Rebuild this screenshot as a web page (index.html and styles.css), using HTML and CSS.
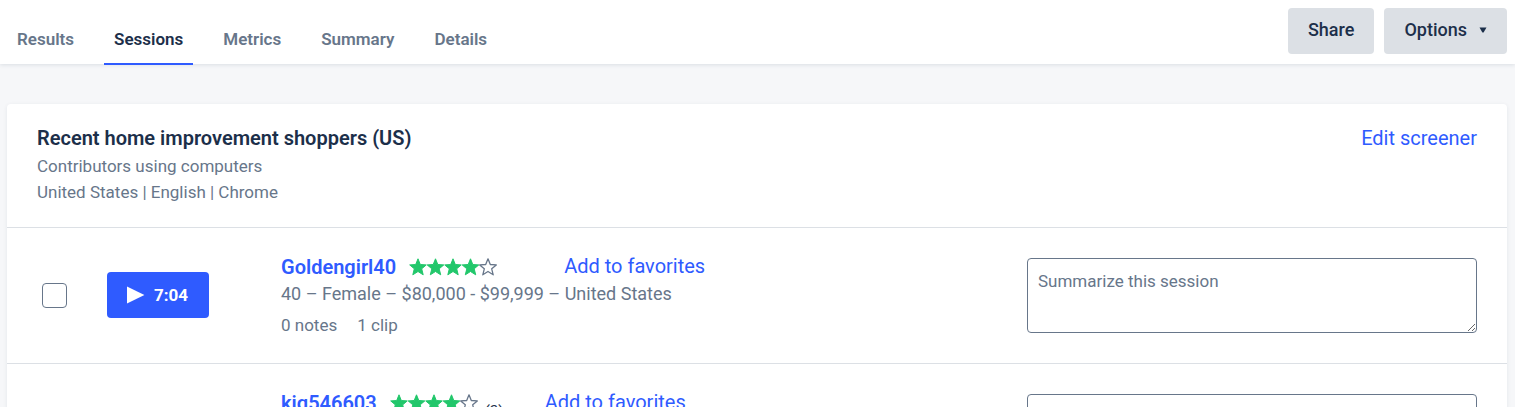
FILE: index.html
```html
<!DOCTYPE html>
<html lang="en">
<head>
<meta charset="utf-8">
<title>Sessions</title>
<link rel="stylesheet" href="styles.css">
</head>
<body>
<svg width="0" height="0" class="sprite" aria-hidden="true">
  <symbol id="star" viewBox="0 0 18 18" overflow="visible"><path d="M9 0.8 L11.3 6.5 L17.3 6.9 L12.7 10.8 L14.2 16.8 L9 13.5 L3.8 16.8 L5.3 10.8 L0.7 6.9 L6.7 6.5 Z" stroke-linejoin="round"/></symbol>
  <symbol id="rating-4" viewBox="0 0 88 18">
    <g fill="#22c76b" stroke="#22c76b">
      <use href="#star" x="0" width="18" height="18"/>
      <use href="#star" x="17.5" width="18" height="18"/>
      <use href="#star" x="35" width="18" height="18"/>
      <use href="#star" x="52.5" width="18" height="18"/>
    </g>
    <use href="#star" x="70" width="18" height="18" fill="none" stroke="#67768a" stroke-width="1.3"/>
  </symbol>
</svg>
<header class="topbar">
  <nav class="tabs">
    <a class="tab" href="#">Results</a>
    <a class="tab tab-active" href="#" aria-current="page">Sessions</a>
    <a class="tab" href="#">Metrics</a>
    <a class="tab" href="#">Summary</a>
    <a class="tab" href="#">Details</a>
  </nav>
  <div class="actions">
    <button class="btn" type="button">Share</button>
    <button class="btn" type="button">Options <svg class="caret" viewBox="0 0 8 6" aria-hidden="true"><path d="M0.5 0.5h7L4.6 5.5h-1.2z"/></svg></button>
  </div>
</header>
<main class="panel">
  <section class="audience">
    <div>
      <h2 class="title">Recent home improvement shoppers (US)</h2>
      <p class="meta">Contributors using computers</p>
      <p class="meta">United States | English | Chrome</p>
    </div>
    <a class="link" href="#">Edit screener</a>
  </section>
  <article class="session">
    <input class="check" type="checkbox" aria-label="Select Goldengirl40">
    <button class="play" type="button"><svg class="play-icon" viewBox="0 0 18 18" aria-hidden="true"><path d="M0 0.4 17.4 9 0 17.6z"/></svg>7:04</button>
    <div class="info">
      <div class="person">
        <a class="name" href="#">Goldengirl40</a>
        <svg class="stars" role="img" aria-label="4 out of 5 stars"><use href="#rating-4"/></svg>
        <span class="votes"></span>
        <a class="link" href="#">Add to favorites</a>
      </div>
      <p class="meta demographics">40 – Female – $80,000 - $99,999 – United States</p>
      <p class="meta counts"><span>0 notes</span><span>1 clip</span></p>
    </div>
    <textarea class="summary" placeholder="Summarize this session" aria-label="Session summary"></textarea>
  </article>
  <article class="session session-next">
    <span></span>
    <span></span>
    <div class="info">
      <div class="person">
        <a class="name" href="#">kig546603</a>
        <svg class="stars" role="img" aria-label="4 out of 5 stars"><use href="#rating-4"/></svg>
        <span class="votes">(2)</span>
        <a class="link" href="#">Add to favorites</a>
      </div>
    </div>
    <textarea class="summary" aria-label="Session summary"></textarea>
  </article>
</main>
</body>
</html>
```

FILE: styles.css
```css
* { box-sizing: border-box; }
html, body { height: 100%; }
body {
  margin: 0;
  overflow: hidden;
  background: #f6f7f9;
  color: #1c2f4a;
  font-family: Roboto, "Liberation Sans", sans-serif;
  font-size: 17px;
  line-height: 26px;
}
a { text-decoration: none; }
p, h2 { margin: 0; }
button, textarea { font: inherit; }
.sprite { position: absolute; }

.topbar {
  display: flex;
  justify-content: space-between;
  padding: 0 8px 0 7px;
  height: 64px;
  background: #fff;
  box-shadow: 0 1px 4px rgba(28, 47, 74, 0.12);
}
.tabs { display: flex; gap: 20px; }
.tab {
  padding: 26px 10px 11px;
  height: 65px;
  color: #67768a;
  font-weight: 600;
}
.tab-active { color: #1c2f4a; border-bottom: 2px solid #2f5bff; }
.actions { display: flex; gap: 10px; padding-top: 8px; }
.btn {
  display: flex;
  align-items: center;
  height: 46px;
  padding: 0 20px 2px;
  border: 0;
  border-radius: 4px;
  background: #dce0e5;
  color: #1c2f4a;
  font-size: 18px;
  font-weight: 500;
}
.caret { width: 8px; height: 6px; margin-left: 12px; fill: #1c2f4a; }

.panel {
  margin: 40px 8px 0 7px;
  border-radius: 4px;
  background: #fff;
  box-shadow: 0 1px 4px rgba(28, 47, 74, 0.08);
}
.audience {
  display: flex;
  justify-content: space-between;
  padding: 20px 30px 22px;
}
.title { font-size: 20px; font-weight: 600; line-height: 29px; }
.meta { color: #67768a; }
.link { color: #2f5bff; font-size: 20px; line-height: 29px; }

.session {
  display: grid;
  grid-template-columns: 70px 174px 1fr 450px;
  align-items: start;
  padding: 24px 30px 25px;
  border-top: 1px solid #dce0e5;
}
.check {
  appearance: none;
  width: 25px;
  height: 25px;
  margin: 31px 0 0 5px;
  border: 1px solid #67768a;
  border-radius: 4px;
  background: #fff;
}
.play {
  display: flex;
  align-items: center;
  gap: 9px;
  width: 102px;
  height: 46px;
  margin-top: 20px;
  padding: 0 20px;
  border: 0;
  border-radius: 4px;
  background: #2f5bff;
  color: #fff;
  font-weight: 700;
}
.play-icon { flex: none; width: 18px; height: 18px; fill: #fff; }
.person { display: flex; align-items: center; height: 29px; }
.name { color: #2f5bff; font-size: 20px; font-weight: 600; }
.stars { flex: none; width: 88px; height: 18px; margin-left: 13px; }
.votes {
  align-self: flex-end;
  width: 67px;
  padding-left: 7px;
  font-size: 15px;
  line-height: 12px;
}
.demographics { font-size: 18px; }
.counts { display: flex; gap: 20px; margin-top: 5px; }
.summary {
  display: block;
  width: 100%;
  height: 75px;
  margin-top: 6px;
  padding: 9px 10px;
  border: 1px solid #67768a;
  border-radius: 4px;
  background: #fff;
  color: #1c2f4a;
}
.summary::placeholder { color: #67768a; }
```
